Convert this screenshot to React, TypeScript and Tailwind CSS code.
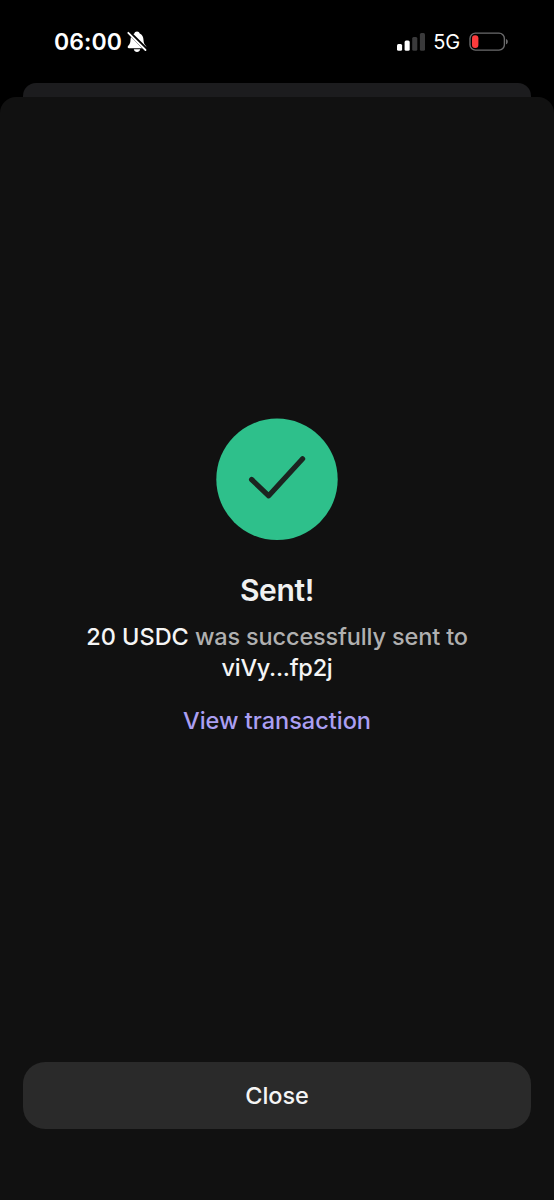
const signalBars = [
    { x: 0, y: 11, fill: '#ffffff' },
    { x: 7.6, y: 7.6, fill: '#ffffff' },
    { x: 15.2, y: 4, fill: '#3a3a3b' },
    { x: 22.9, y: 0, fill: '#3a3a3b' },
];

const BellOffIcon = () => (
    <svg width="20" height="22" viewBox="0 0 20 22" fill="none">
        <path
            d="M10 .5C8.6 .5 7.6 1.3 7.3 2.5C4.8 3.5 3.6 5.8 3.5 9C3.4 12.2 2.6 13.3 1.2 14.7C.3 15.7 .6 17.2 2 17.2H18C19.4 17.2 19.7 15.7 18.8 14.7C17.4 13.3 16.6 12.2 16.5 9C16.4 5.8 15.2 3.5 12.7 2.5C12.4 1.3 11.4 .5 10 .5Z"
            fill="#ffffff"
        />
        <path d="M6.8 18.3H13.2C12.8 20.1 11.6 21 10 21C8.4 21 7.2 20.1 6.8 18.3Z" fill="#ffffff" />
        <path d="M1.6 1L19.3 18.6" stroke="#000000" strokeWidth="3.8" />
        <path d="M1.3 1.8L18.5 19" stroke="#ffffff" strokeWidth="1.8" strokeLinecap="round" />
    </svg>
);

const SignalIcon = () => (
    <svg width="28" height="18" viewBox="0 0 28 18">
        {signalBars.map((bar) => (
            <rect key={bar.x} x={bar.x} y={bar.y} width="5.1" height={17.8 - bar.y} rx="1.5" fill={bar.fill} />
        ))}
    </svg>
);

const BatteryIcon = () => (
    <svg width="40" height="20" viewBox="0 0 40 20" fill="none">
        <rect x="1" y="1.1" width="34.4" height="17" rx="5.4" stroke="#6b6b6c" strokeWidth="1.4" />
        <rect x="3" y="3.3" width="6.4" height="12.6" rx="3" fill="#fb3b3c" />
        <path d="M37 6.9C39.4 7.7 39.4 11.5 37 12.3Z" fill="#6b6b6c" />
    </svg>
);

const StatusBar = () => (
    <div className="flex h-[83px] items-center justify-between pr-[45px] pl-[54px] text-white">
        <div className="flex items-center gap-[5px]">
            <span className="text-[23px] leading-6 font-semibold tracking-[0.1px]">06:00</span>
            <BellOffIcon />
        </div>
        <div className="flex items-center">
            <SignalIcon />
            <span className="ml-[8px] text-[20px] leading-6 tracking-[-0.2px]">5G</span>
            <span className="ml-[9px]"><BatteryIcon /></span>
        </div>
    </div>
);

const SuccessBadge = () => (
    <svg width="122" height="122" viewBox="0 0 122 122" fill="none">
        <circle cx="61" cy="61.3" r="60.7" fill="#2ec08b" />
        <path
            d="M35.6 61.5L52.7 77.8L86.6 40.8"
            stroke="#1c2420"
            strokeWidth="5.2"
            strokeLinecap="round"
            strokeLinejoin="round"
        />
    </svg>
);

export default function App() {
    return (
        <div className="flex h-[1200px] w-[554px] flex-col bg-black font-['Inter',sans-serif]">
            <StatusBar />

            {/* Card peeking out behind the sheet */}
            <div className="mx-[23px] h-[14px] rounded-t-[13px] bg-[#1c1c1e]" />

            <div className="flex flex-1 flex-col rounded-t-[16px] bg-[#111111] px-[23px] pb-[71px]">
                <div className="flex flex-1 flex-col items-center pt-[321px] text-center">
                    <SuccessBadge />
                    <h1 className="mt-[31px] text-[30px] leading-[38px] font-semibold tracking-[-0.35px] text-[#f1f1f1]">Sent!</h1>
                    <p className="mt-[12px] w-[420px] text-[23.5px] leading-[31px] font-medium tracking-[-0.15px] text-[#b0b0b0]">
                        <span className="tracking-normal text-[#f5f5f5]">20 USDC</span> was successfully sent to{' '}
                        <span className="tracking-[-0.25px] text-[#f5f5f5]">viVy...fp2j</span>
                    </p>
                    <a href="#" className="mt-[22px] text-[23.5px] leading-[31px] font-medium text-[#ab9ff2]">
                        View transaction
                    </a>
                </div>

                <button className="h-[67px] w-full rounded-[22px] bg-[#2a2a2a] text-[23.5px] font-medium tracking-[-0.1px] text-[#f5f5f5]">
                    Close
                </button>
            </div>
        </div>
    );
}
